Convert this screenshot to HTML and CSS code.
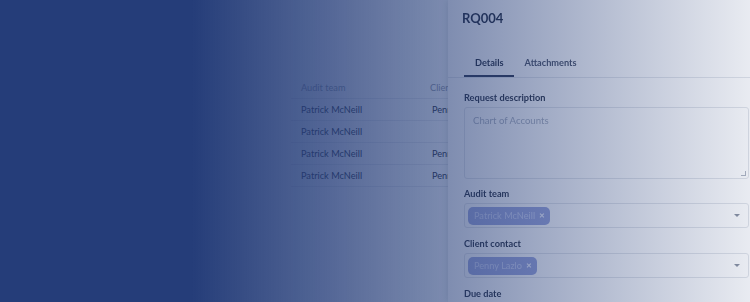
FILE: index.html
```html
<!DOCTYPE html>
<html lang="en">
<head>
<meta charset="UTF-8" />
<meta name="viewport" content="width=device-width, initial-scale=1" />
<title>Requests</title>
<link rel="stylesheet" href="styles.css">
</head>
<body>

<div class="page">
  <table class="requests">
    <thead>
      <tr><th>Audit team</th><th>Client contact</th></tr>
    </thead>
    <tbody>
      <tr><td>Patrick McNeill</td><td>Penny Lazlo</td></tr>
      <tr><td>Patrick McNeill</td><td></td></tr>
      <tr><td>Patrick McNeill</td><td>Penny Lazlo</td></tr>
      <tr><td>Patrick McNeill</td><td>Penny Lazlo</td></tr>
    </tbody>
  </table>
</div>

<aside class="drawer">
  <h1 class="drawer-title">RQ004</h1>
  <div class="tabs">
    <div class="tab active">Details</div>
    <div class="tab">Attachments</div>
  </div>

  <div class="form">
    <label class="field-label">Request description</label>
    <div class="textarea">
      <span class="placeholder">Chart of Accounts</span>
      <span class="grip"></span>
    </div>

    <label class="field-label">Audit team</label>
    <div class="select">
      <span class="chip">Patrick McNeill <span class="chip-x">&#x2715;</span></span>
      <span class="caret"></span>
    </div>

    <label class="field-label">Client contact</label>
    <div class="select">
      <span class="chip">Penny Lazlo <span class="chip-x">&#x2715;</span></span>
      <span class="caret"></span>
    </div>

    <label class="field-label">Due date</label>
  </div>
</aside>

<div class="overlay"></div>

</body>
</html>
```

FILE: styles.css
```css
body {
  margin: 0;
  width: 750px;
  height: 302px;
  overflow: hidden;
  background: #fafbfc;
  font-family: Lato, 'Noto Sans', sans-serif;
  color: #232b3d;
}

/* table behind the drawer */
.page {
  padding: 77px 0 0 291px;
}
.requests {
  border-collapse: collapse;
  font-size: 9.2px;
}
.requests th,
.requests td {
  height: 21px;
  padding: 0 10px;
  text-align: left;
  border-bottom: 1px solid #e4e7ec;
  white-space: nowrap;
}
.requests th {
  font-weight: 400;
  color: #8d95a5;
}
.requests th:first-child,
.requests td:first-child {
  width: 109px;
}
.requests td:last-child {
  padding-left: 12px;
}
.requests th:last-child {
  width: 120px;
}

/* drawer */
.drawer {
  position: fixed;
  top: 0;
  left: 448px;
  width: 317px;
  height: 100%;
  background: #fff;
  box-shadow: -2px 0 6px rgba(20, 30, 60, 0.12);
}
.drawer-title {
  margin: 0;
  padding: 8px 14px 0;
  font-size: 13px;
  line-height: 20px;
  font-weight: 700;
  color: #1d2538;
}
.tabs {
  display: flex;
  margin-top: 19px;
  padding: 0 16px;
  border-bottom: 1px solid #e3e6eb;
}
.tab {
  padding: 8px 10px 4px 11px;
  font-size: 9.2px;
  line-height: 16px;
  font-weight: 700;
  color: #4a5266;
  border-bottom: 2px solid transparent;
}
.tab.active {
  color: #1d2538;
  border-bottom-color: #2b3550;
}

.form {
  padding: 13px 16px 0;
}
.field-label {
  display: block;
  font-size: 9.2px;
  line-height: 14px;
  font-weight: 700;
  color: #262e40;
  margin-bottom: 2px;
}
.textarea {
  position: relative;
  padding: 6px 8px;
  border: 1px solid #e2e5ea;
  border-radius: 3px;
  box-sizing: border-box;
  height: 72px;
  margin-bottom: 8px;
  font-size: 9.6px;
  line-height: 14px;
}
.placeholder {
  color: #a9b0be;
}
.grip {
  position: absolute;
  right: 2px;
  bottom: 2px;
  width: 4px;
  height: 4px;
  border-right: 1px solid #b0b6c2;
  border-bottom: 1px solid #b0b6c2;
}
.select {
  display: flex;
  align-items: center;
  justify-content: space-between;
  height: 25px;
  box-sizing: border-box;
  padding: 0 8px 0 3px;
  border: 1px solid #e2e5ea;
  border-radius: 3px;
  margin-bottom: 9px;
}
.chip {
  display: inline-flex;
  align-items: center;
  height: 18px;
  padding: 0 5px 0 6px;
  border-radius: 5px;
  background: #9aa5dc;
  color: #ccd3f4;
  font-size: 9.2px;
}
.chip-x {
  margin-left: 4px;
  font-size: 7px;
  font-weight: 700;
  color: #f2f4ff;
}
.caret {
  width: 0;
  height: 0;
  border-left: 3px solid transparent;
  border-right: 3px solid transparent;
  border-top: 3px solid #8c93a3;
}

/* tinted screen on top */
.overlay {
  position: fixed;
  inset: 0;
  pointer-events: none;
  background: linear-gradient(90deg, #253d79 0, #253d79 192px, rgba(37, 61, 121, 0.1) 100%);
}
```
